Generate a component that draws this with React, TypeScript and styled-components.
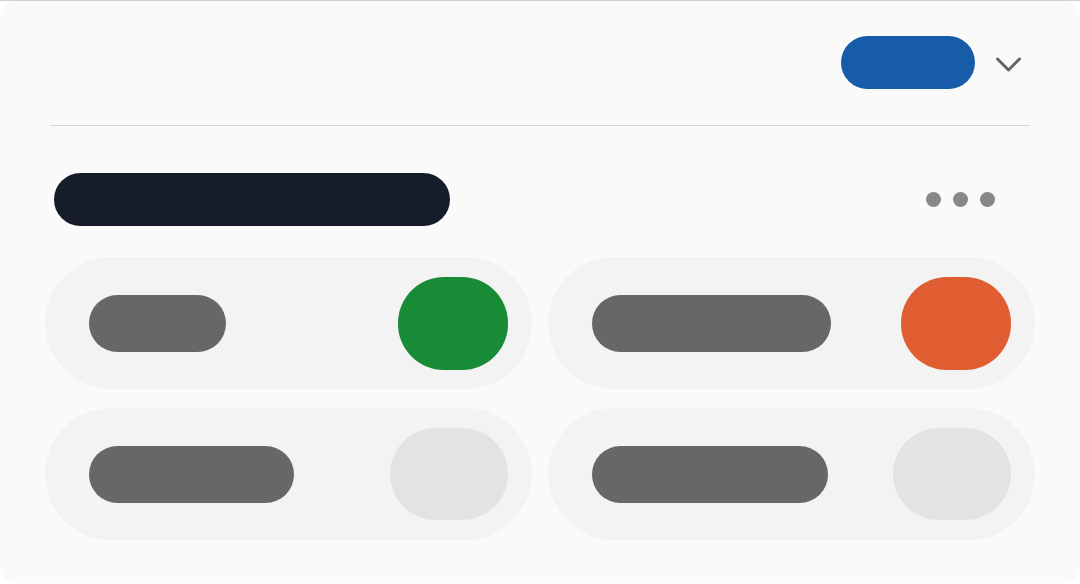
import React from "react";
import styled, { createGlobalStyle } from "styled-components";

const GlobalStyle = createGlobalStyle`
  html, body {
    margin: 0;
    padding: 0;
    background: #ffffff;
    font-family: "Liberation Sans", Arial, sans-serif;
  }
`;

const Page = styled.div`
  border-top: 1px solid #cfcfcf;
  height: 583px;
  box-sizing: border-box;
  overflow: hidden;
`;

const Card = styled.div`
  height: 582px;
  background: #fafafa;
  border-radius: 16px;
  box-sizing: border-box;
  padding-top: 35px;
`;

const Header = styled.div`
  display: flex;
  justify-content: flex-end;
  align-items: center;
  gap: 20px;
  padding-right: 59px;
`;

const PrimaryButton = styled.button`
  width: 134px;
  height: 53px;
  border: none;
  border-radius: 27px;
  background: #175ca8;
  padding: 0;
  cursor: pointer;
`;

const Chevron = styled.svg`
  width: 26px;
  height: 20px;
  display: block;
`;

const Divider = styled.hr`
  margin: 36px 50px 0;
  border: none;
  height: 1px;
  background: #d6d6d6;
`;

const TitleRow = styled.div`
  display: flex;
  justify-content: space-between;
  align-items: center;
  margin-top: 47px;
  padding: 0 85px 0 54px;
`;

const TitleBar = styled.div`
  width: 396px;
  height: 53px;
  border-radius: 27px;
  background: #171c2b;
`;

const Dots = styled.div`
  display: flex;
  gap: 12px;
`;

const Dot = styled.span`
  width: 15px;
  height: 15px;
  border-radius: 50%;
  background: #888888;
`;

const Grid = styled.div`
  display: grid;
  grid-template-columns: 487px 487px;
  column-gap: 16px;
  row-gap: 19px;
  margin-top: 31px;
  padding: 0 45px;
`;

const Tile = styled.div`
  height: 132px;
  border-radius: 66px;
  background: #f3f3f3;
  display: flex;
  align-items: center;
  justify-content: space-between;
  padding: 0 24px 0 44px;
  box-sizing: border-box;
`;

const Label = styled.div<{ $w: number }>`
  width: ${(p) => p.$w}px;
  height: 57px;
  border-radius: 29px;
  background: #666766;
`;

const Toggle = styled.div<{ $tone: "green" | "orange" | "off" }>`
  width: ${(p) => (p.$tone === "off" ? 118 : 110)}px;
  height: ${(p) => (p.$tone === "off" ? 92 : 93)}px;
  border-radius: 46px;
  background: ${(p) =>
    p.$tone === "green" ? "#178b35" : p.$tone === "orange" ? "#e05d31" : "#e3e3e3"};
`;

const tiles: { w: number; tone: "green" | "orange" | "off" }[] = [
  { w: 137, tone: "green" },
  { w: 239, tone: "orange" },
  { w: 205, tone: "off" },
  { w: 236, tone: "off" },
];

const App = () => {
  return (
    <Page>
      <GlobalStyle />
      <Card>
        <Header>
          <PrimaryButton type="button" aria-label="action" />
          <Chevron viewBox="0 0 26 20" fill="none">
            <polyline
              points="2.5,6 13.5,17 24.5,6"
              stroke="#666666"
              strokeWidth="3"
              strokeLinecap="round"
              strokeLinejoin="round"
            />
          </Chevron>
        </Header>
        <Divider />
        <TitleRow>
          <TitleBar />
          <Dots>
            <Dot />
            <Dot />
            <Dot />
          </Dots>
        </TitleRow>
        <Grid>
          {tiles.map((t, i) => (
            <Tile key={i}>
              <Label $w={t.w} />
              <Toggle $tone={t.tone} />
            </Tile>
          ))}
        </Grid>
      </Card>
    </Page>
  );
};

export default App;
